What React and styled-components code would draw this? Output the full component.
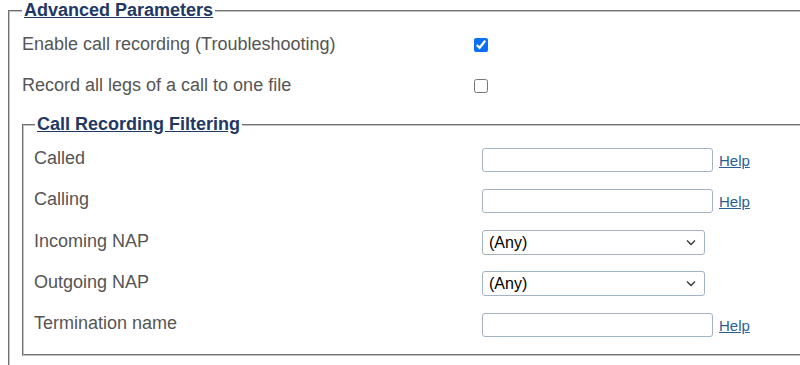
import React from "react";
import styled, { createGlobalStyle } from "styled-components";

const Global = createGlobalStyle`
  html, body { margin: 0; padding: 0; background: #fff; overflow: hidden; }
  body { font-family: "Liberation Sans", Arial, sans-serif; }
`;

const Page = styled.div`
  width: 1100px;
  padding-left: 8px;
`;

const Fieldset = styled.fieldset`
  margin: 0;
  border: 2px groove #c4c4c4;
  padding: ${(p) => (p.$inner ? "3px 10px 10px 10px" : "3px 12px 40px 12px")};
  ${(p) => p.$inner && "margin-top: 8px;"}
  min-width: 0;
`;

const Legend = styled.legend`
  font-size: 18px;
  font-weight: bold;
  color: #1f3864;
  text-decoration: underline;
  padding: 0 2px;
  margin-left: ${(p) => (p.$inner ? "1px" : "0")};
  line-height: 21px;
`;

const Row = styled.div`
  display: grid;
  grid-template-columns: ${(p) => p.$labelWidth}px auto auto;
  justify-content: start;
  align-items: center;
  height: ${(p) => p.$h || 41}px;
`;

const Label = styled.span`
  font-size: 18px;
  color: #555;
`;

const Check = styled.input.attrs({ type: "checkbox" })`
  width: 14px;
  height: 14px;
  margin: 0;
  accent-color: #0b6ff5;
`;

const TextBox = styled.input.attrs({ type: "text" })`
  box-sizing: border-box;
  width: 231px;
  height: 24px;
  margin: 0;
  margin-top: 2px;
  border: 1px solid #a3b3c6;
  border-radius: 3px;
  font-family: "Liberation Sans", Arial, sans-serif;
  font-size: 15px;
`;

const SelectWrap = styled.div`
  position: relative;
  width: 223px;
  height: 25px;
  margin-top: 2px;
`;

const Select = styled.select`
  appearance: none;
  -webkit-appearance: none;
  box-sizing: border-box;
  width: 100%;
  height: 100%;
  margin: 0;
  border: 1px solid #a3b3c6;
  border-radius: 3px;
  background: #fff;
  color: #000;
  font-family: "Liberation Sans", Arial, sans-serif;
  font-size: 16px;
  padding-left: 6px;
`;

const Chevron = styled.svg`
  position: absolute;
  right: 9px;
  top: 9px;
  width: 10px;
  height: 7px;
  pointer-events: none;
`;

const Help = styled.a`
  font-size: 15px;
  color: #2a5f96;
  text-decoration: underline;
  margin-left: 6px;
  margin-top: 4px;
  cursor: pointer;
`;

const filters = [
  { label: "Called", kind: "text" },
  { label: "Calling", kind: "text" },
  { label: "Incoming NAP", kind: "select" },
  { label: "Outgoing NAP", kind: "select" },
  { label: "Termination name", kind: "text" },
];

export default function App() {
  return (
    <Page>
      <Global />
      <Fieldset>
        <Legend>Advanced Parameters</Legend>
        <Row $labelWidth={452}>
          <Label>Enable call recording (Troubleshooting)</Label>
          <Check defaultChecked />
        </Row>
        <Row $labelWidth={452}>
          <Label>Record all legs of a call to one file</Label>
          <Check />
        </Row>
        <Fieldset $inner>
          <Legend $inner>Call Recording Filtering</Legend>
          {filters.map((f) => (
            <Row key={f.label} $labelWidth={448} $h={41.3}>
              <Label>{f.label}</Label>
              {f.kind === "text" ? (
                <>
                  <TextBox />
                  <Help>Help</Help>
                </>
              ) : (
                <SelectWrap>
                  <Select defaultValue="any">
                    <option value="any">(Any)</option>
                  </Select>
                  <Chevron viewBox="0 0 10 7">
                    <path d="M1 1.5 L5 5.5 L9 1.5" fill="none" stroke="#333" strokeWidth="1.3" />
                  </Chevron>
                </SelectWrap>
              )}
            </Row>
          ))}
        </Fieldset>
      </Fieldset>
    </Page>
  );
}
